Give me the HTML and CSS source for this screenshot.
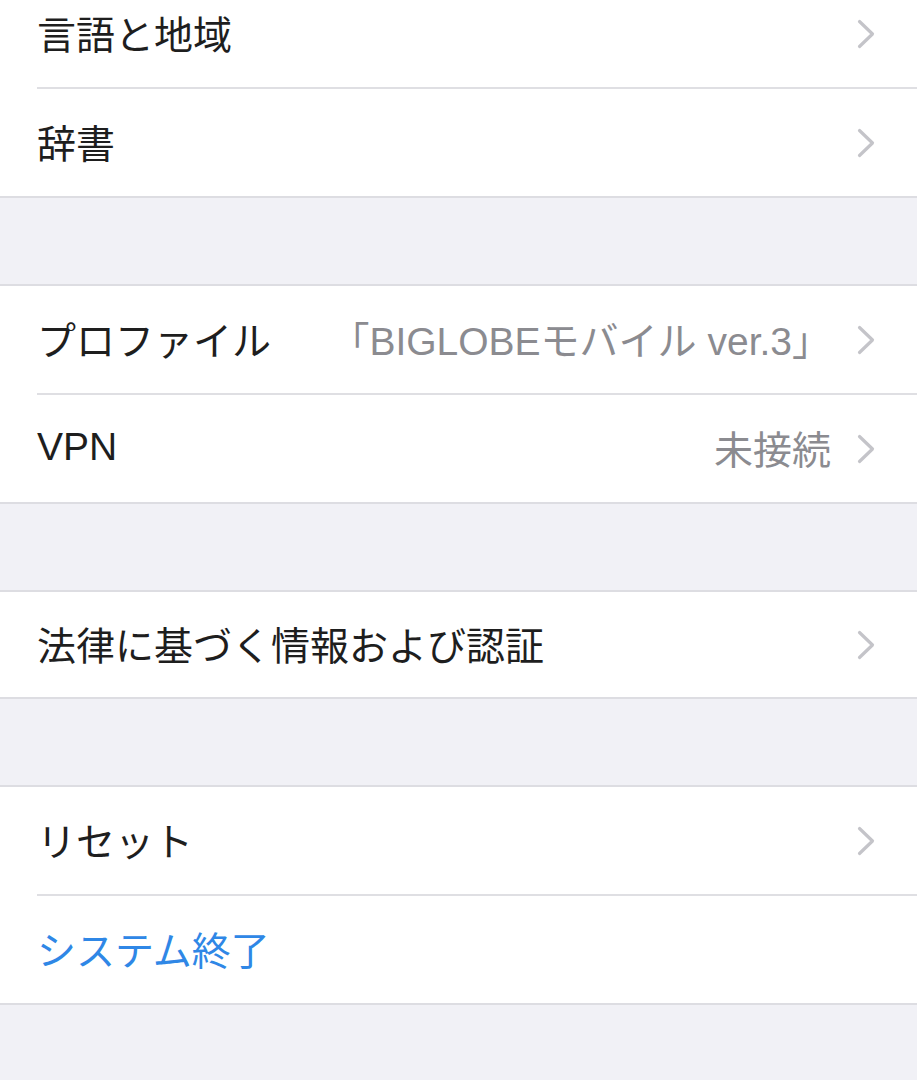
FILE: index.html
```html
<!DOCTYPE html>
<html lang="ja">
<head>
<meta charset="utf-8">
<title>一般</title>
<link rel="stylesheet" href="styles.css">
</head>
<body>
<div class="list">
  <div class="group">
    <div class="row"><span class="label">言語と地域</span><span class="spacer"></span><svg class="chev" viewBox="0 0 18 30"><polyline points="2.5,2.5 15.5,15 2.5,27.5"/></svg></div>
    <div class="row"><span class="label">辞書</span><span class="spacer"></span><svg class="chev" viewBox="0 0 18 30"><polyline points="2.5,2.5 15.5,15 2.5,27.5"/></svg></div>
  </div>
  <div class="group">
    <div class="row"><span class="label">プロファイル</span><span class="spacer"></span><span class="value">「BIGLOBEモバイル ver.3」</span><svg class="chev" viewBox="0 0 18 30"><polyline points="2.5,2.5 15.5,15 2.5,27.5"/></svg></div>
    <div class="row"><span class="label">VPN</span><span class="spacer"></span><span class="value">未接続</span><svg class="chev" viewBox="0 0 18 30"><polyline points="2.5,2.5 15.5,15 2.5,27.5"/></svg></div>
  </div>
  <div class="group single">
    <div class="row"><span class="label">法律に基づく情報および認証</span><span class="spacer"></span><svg class="chev" viewBox="0 0 18 30"><polyline points="2.5,2.5 15.5,15 2.5,27.5"/></svg></div>
  </div>
  <div class="group">
    <div class="row"><span class="label">リセット</span><span class="spacer"></span><svg class="chev" viewBox="0 0 18 30"><polyline points="2.5,2.5 15.5,15 2.5,27.5"/></svg></div>
    <div class="row"><span class="label action">システム終了</span></div>
  </div>
</div>
</body>
</html>
```
FILE: styles.css
```css
html, body {
  margin: 0;
  padding: 0;
  background: #f1f1f6;
}
body {
  font-family: "Liberation Sans", "Noto Sans CJK JP", sans-serif;
  font-size: 39px;
  color: #1e1e1e;
  overflow: hidden;
}
.list {
  display: flex;
  flex-direction: column;
  gap: 86px;
  margin-top: -22px;
}
.group {
  background: #ffffff;
  border-top: 2px solid #dddde2;
  border-bottom: 2px solid #dddde2;
}
.row {
  box-sizing: border-box;
  height: 109px;
  margin-left: 37px;
  padding-right: 42px;
  display: flex;
  align-items: center;
  border-bottom: 2px solid #dfdfe3;
}
.row:last-child {
  border-bottom: none;
  height: 107px;
}
.group.single .row {
  height: 105px;
}
.label {
  white-space: nowrap;
  padding-bottom: 3px;
}
.spacer {
  flex: 1;
}
.value {
  color: #8b8b90;
  white-space: nowrap;
  margin-right: 26px;
  padding-bottom: 3px;
}
.action {
  color: #2f87e6;
}
.chev {
  width: 18px;
  height: 30px;
  flex: none;
}
.chev polyline {
  fill: none;
  stroke: #c4c4c9;
  stroke-width: 3.2;
  stroke-linecap: round;
  stroke-linejoin: round;
}
```
